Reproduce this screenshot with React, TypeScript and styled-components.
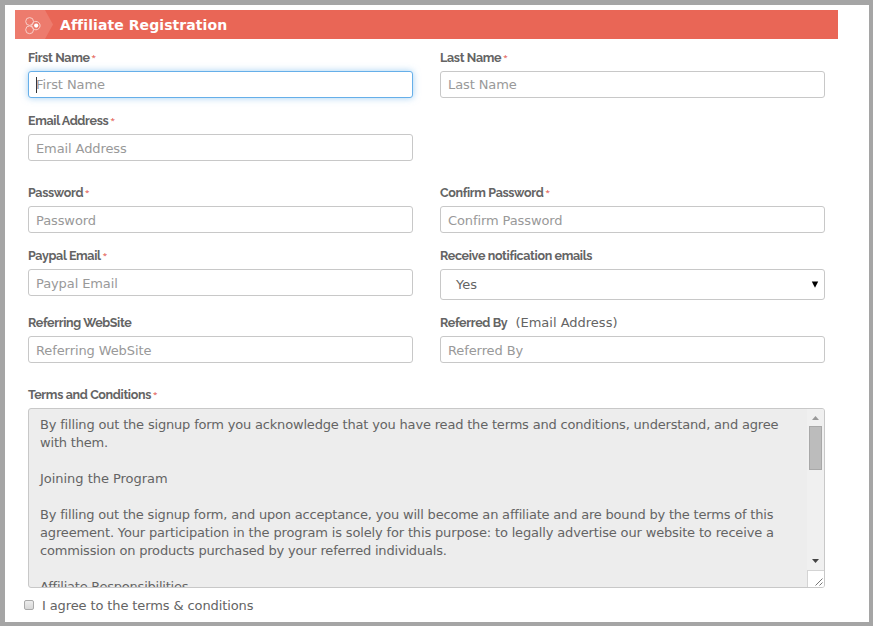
import React from "react";
import styled, { createGlobalStyle } from "styled-components";

const GlobalStyle = createGlobalStyle`
  *, *::before, *::after { box-sizing: border-box; }
  body {
    margin: 0;
    background: #a5a5a5;
    font-family: "DejaVu Sans", Verdana, sans-serif;
    font-size: 13px;
    color: #646464;
  }
`;

const Page = styled.main`
  width: 873px;
  height: 626px;
  padding: 5px 31px 0 10px;
  border: solid #a5a5a5;
  border-width: 5px 4px 4px 5px;
  background: #fff;
  overflow: hidden;
`;

const Header = styled.header`
  display: flex;
  align-items: center;
  width: 823px;
  height: 29px;
  background: #e96656;
`;

const HeaderIcon = styled.svg`
  display: block;
  flex: none;
  width: 45px;
  height: 29px;
`;

const Title = styled.h1`
  margin: 0;
  padding-top: 1px;
  font-size: 14px;
  line-height: 28px;
  font-weight: 700;
  letter-spacing: 0.08px;
  color: #fff;
  white-space: nowrap;
`;

const Form = styled.form`
  display: flex;
  flex-direction: column;
  width: 797px;
  margin: 10px 0 0 13px;
`;

const Row = styled.div<{ $gap: number }>`
  display: grid;
  grid-template-columns: 385px 385px;
  column-gap: 27px;
  align-items: start;
  margin-bottom: ${(p) => p.$gap}px;
`;

const FieldBox = styled.div`
  display: flex;
  flex-direction: column;
  gap: 4px;
`;

const LabelLine = styled.div`
  display: flex;
  height: 18px;
  line-height: 18px;
  white-space: nowrap;
`;

const Label = styled.label`
  font-family: Raleway, "Open Sans", sans-serif;
  font-size: 12.5px;
  font-weight: 700;
  letter-spacing: -0.33px;
`;

const Star = styled.span`
  margin-left: 2px;
  font-family: "Open Sans", sans-serif;
  font-size: 8px;
  line-height: 15px;
  color: #e0483c;
`;

const Hint = styled.span`
  margin-left: 8px;
`;

const Input = styled.div<{ $focus?: boolean; $drop: number }>`
  display: flex;
  align-items: center;
  height: 27px;
  padding: ${(p) => p.$drop * 2}px 7px 0;
  border: 1px solid ${(p) => (p.$focus ? "#66afe9" : "#c8c8c8")};
  border-radius: 3px;
  background: #fff;
  box-shadow: ${(p) => (p.$focus ? "0 0 7px rgba(102, 175, 233, 0.6)" : "none")};
  color: #999;
  letter-spacing: -0.1px;
  white-space: nowrap;
`;

const Caret = styled.i`
  width: 1px;
  height: 16px;
  margin-right: -1px;
  background: #333;
`;

const Select = styled.div`
  display: flex;
  align-items: center;
  justify-content: space-between;
  height: 31px;
  padding: 0 5px 0 15px;
  border: 1px solid #c8c8c8;
  border-radius: 3px;
`;

const Terms = styled.div`
  display: flex;
  height: 180px;
  border: 1px solid #c8c8c8;
  border-radius: 3px;
  background: #ededed;
  overflow: hidden;
`;

const TermsText = styled.div`
  flex: 1;
  padding: 7px 0 0 11px;
`;

const TermsLine = styled.p<{ $track?: number }>`
  margin: 0;
  height: 18px;
  line-height: 18px;
  white-space: nowrap;
  letter-spacing: ${(p) => p.$track ?? 0}px;
`;

const Scrollbar = styled.div`
  display: flex;
  flex-direction: column;
  align-items: center;
  width: 17px;
  background: #f0f0f0;
`;

const Arrow = styled.svg`
  display: block;
  flex: none;
  width: 15px;
  height: 17px;
`;

const Thumb = styled.div`
  width: 13px;
  height: 44px;
  margin-bottom: auto;
  border: 1px solid #a8a8a8;
  background: #bcbcbc;
`;

const Grip = styled.svg`
  display: block;
  flex: none;
  width: 17px;
  height: 17px;
  border: solid #d4d4d4;
  border-width: 1px 0 0 1px;
  background: #fff;
`;

const Agree = styled.label`
  display: flex;
  align-items: center;
  height: 18px;
  margin: 8px 0 0 -4px;
  letter-spacing: -0.11px;
`;

const Checkbox = styled.span`
  width: 10px;
  height: 10px;
  margin-right: 8px;
  border: 1px solid #aaa;
  border-radius: 2px;
  background: linear-gradient(#ededed, #d8d8d8);
`;

type FieldProps = {
  label: string;
  required?: boolean;
  hint?: string;
  placeholder?: string;
  focus?: boolean;
  drop?: number;
  children?: React.ReactNode;
};

function Field({ label, required, hint, placeholder, focus, drop = 1, children }: FieldProps) {
  return (
    <FieldBox>
      <LabelLine>
        <Label>{label}</Label>
        {required && <Star>*</Star>}
        {hint && <Hint>{hint}</Hint>}
      </LabelLine>
      {children ?? (
        <Input $focus={focus} $drop={drop}>
          {focus && <Caret />}
          {placeholder}
        </Input>
      )}
    </FieldBox>
  );
}

const terms: { text: string; track?: number }[] = [
  {
    text: "By filling out the signup form you acknowledge that you have read the terms and conditions, understand, and agree",
    track: -0.178,
  },
  { text: "with them.", track: -0.18 },
  { text: "" },
  { text: "Joining the Program", track: -0.03 },
  { text: "" },
  {
    text: "By filling out the signup form, and upon acceptance, you will become an affiliate and are bound by the terms of this",
    track: -0.194,
  },
  {
    text: "agreement. Your participation in the program is solely for this purpose: to legally advertise our website to receive a",
    track: -0.155,
  },
  { text: "commission on products purchased by your referred individuals.", track: -0.19 },
  { text: "" },
  { text: "Affiliate Responsibilities", track: -0.23 },
];

export default function App() {
  return (
    <>
      <GlobalStyle />
      <Page>
        <Header>
          <HeaderIcon viewBox="0 0 45 29">
            <path d="M0 0H30L38 14.5L30 29H0Z" fill="#ed7b6d" />
            <g fill="none" stroke="#f9cfc9" strokeWidth="1">
              <circle cx="14.6" cy="11.5" r="3.9" />
              <circle cx="14.6" cy="19.8" r="3.9" />
              <circle cx="20.9" cy="15.6" r="4.2" />
            </g>
            <circle cx="21.2" cy="15.6" r="2.1" fill="#fff" />
          </HeaderIcon>
          <Title>Affiliate Registration</Title>
        </Header>
        <Form>
          <Row $gap={14}>
            <Field label="First Name" required placeholder="First Name" focus drop={0} />
            <Field label="Last Name" required placeholder="Last Name" drop={0} />
          </Row>
          <Row $gap={23}>
            <Field label="Email Address" required placeholder="Email Address" />
          </Row>
          <Row $gap={14}>
            <Field label="Password" required placeholder="Password" />
            <Field label="Confirm Password" required placeholder="Confirm Password" />
          </Row>
          <Row $gap={14}>
            <Field label="Paypal Email" required placeholder="Paypal Email" />
            <Field label="Receive notification emails">
              <Select>
                Yes
                <svg width="8" height="7" viewBox="0 0 8 7">
                  <path d="M0.8 0.5H7.2L4 6.8Z" fill="#000" />
                </svg>
              </Select>
            </Field>
          </Row>
          <Row $gap={23}>
            <Field label="Referring WebSite" placeholder="Referring WebSite" />
            <Field label="Referred By" hint="(Email Address)" placeholder="Referred By" />
          </Row>
          <Field label="Terms and Conditions" required>
            <Terms>
              <TermsText>
                {terms.map((line, i) => (
                  <TermsLine key={i} $track={line.track}>{line.text}</TermsLine>
                ))}
              </TermsText>
              <Scrollbar>
                <Arrow viewBox="0 0 15 17">
                  <path d="M4 11L7.5 7L11 11Z" fill="#999" />
                </Arrow>
                <Thumb />
                <Arrow viewBox="0 0 15 17">
                  <path d="M4 6L7.5 10L11 6Z" fill="#444" />
                </Arrow>
                <Grip viewBox="0 0 16 16">
                  <path d="M7.5 14.5L14.5 7.5M11.5 14.5L14.5 11.5" stroke="#777" fill="none" />
                </Grip>
              </Scrollbar>
            </Terms>
          </Field>
          <Agree>
            <Checkbox />
            I agree to the terms &amp; conditions
          </Agree>
        </Form>
      </Page>
    </>
  );
}
